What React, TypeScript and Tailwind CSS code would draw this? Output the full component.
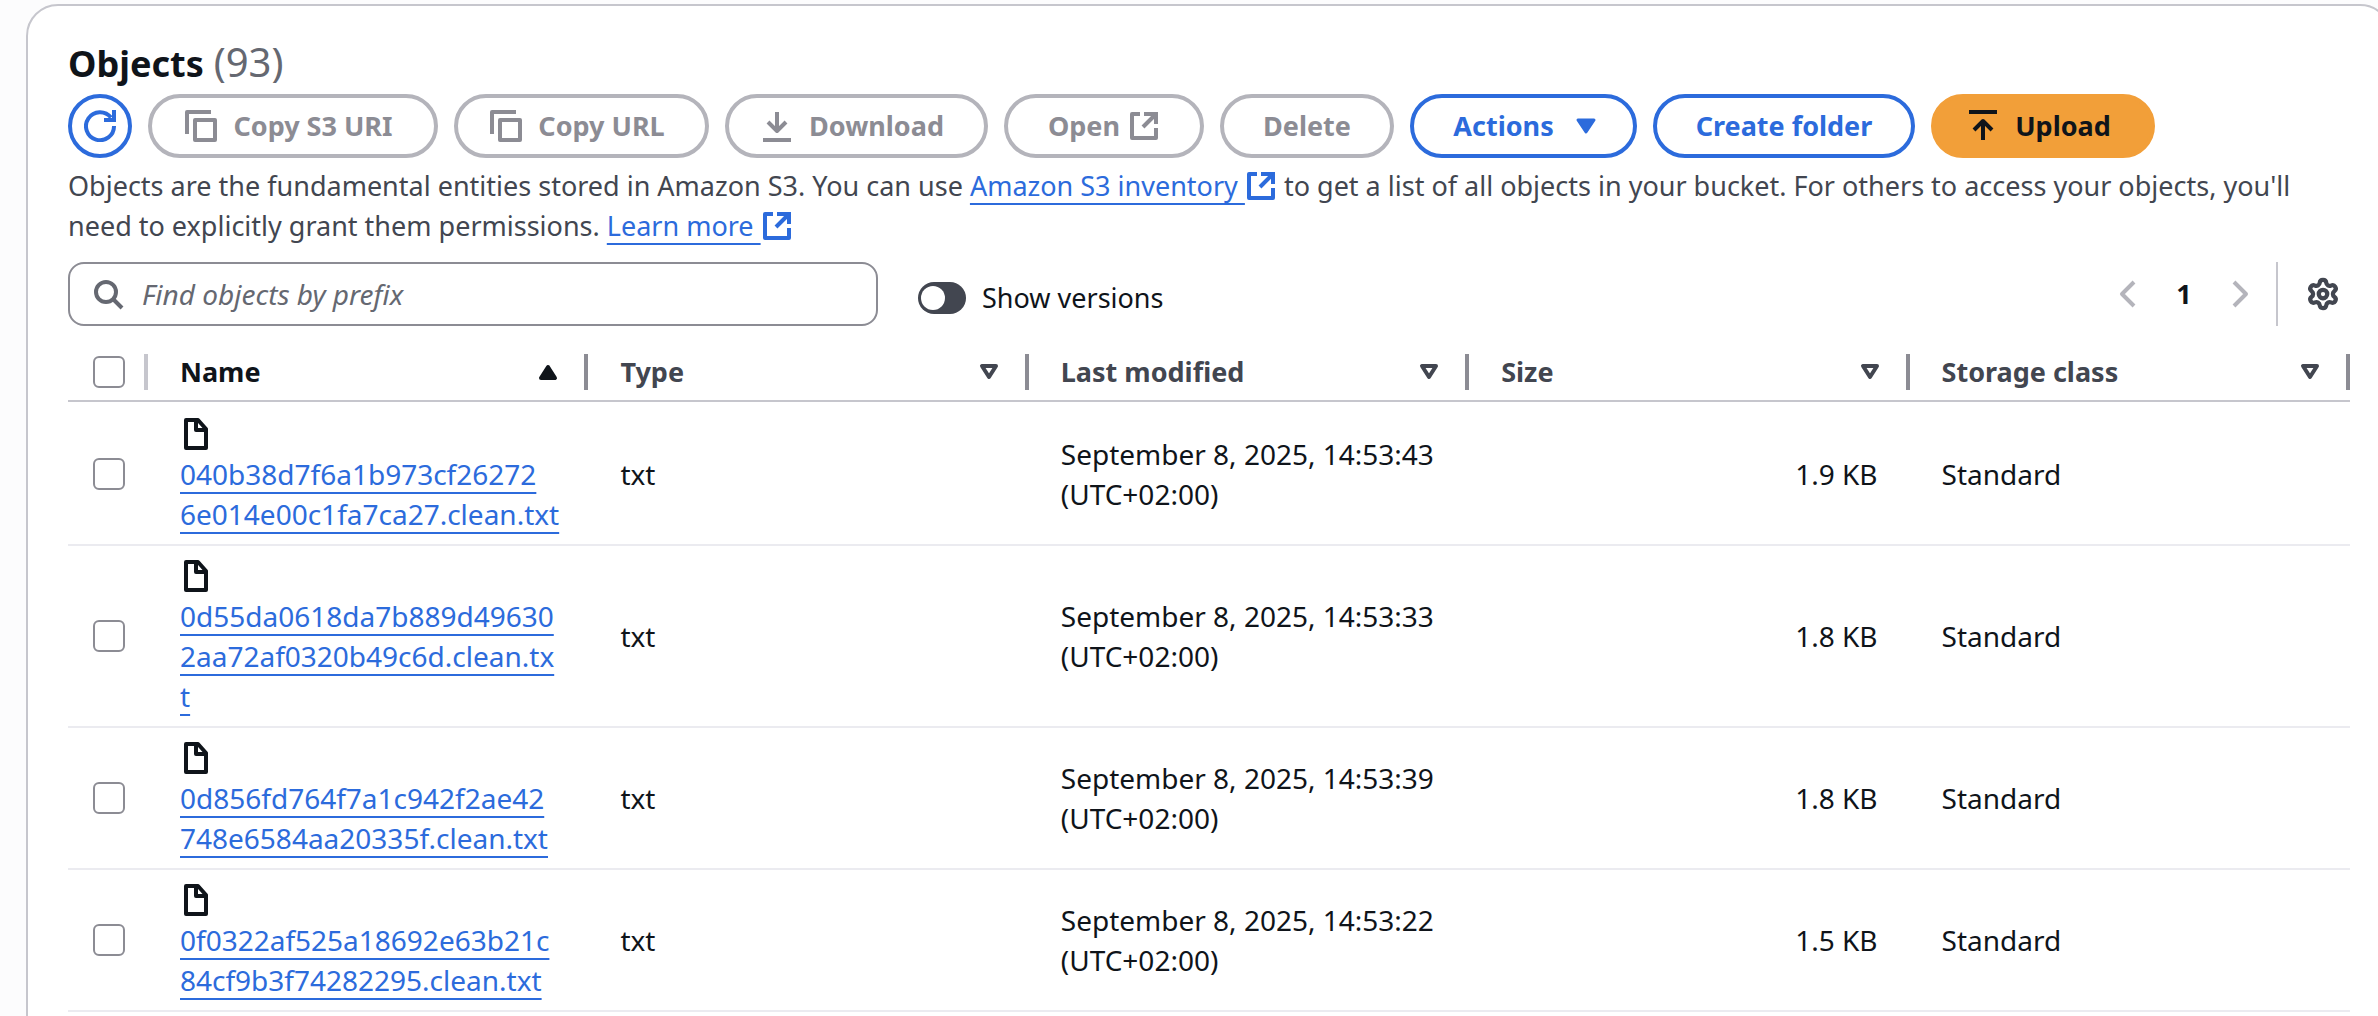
import React from "react";
import { Settings } from "lucide-react";

interface S3Object {
  // long keys are wrapped by hand so that they break at the column edge
  name: string[];
  type: string;
  modified: string;
  size: string;
  storageClass: string;
}

const objects: S3Object[] = [
  {
    name: ["040b38d7f6a1b973cf26272", "6e014e00c1fa7ca27.clean.txt"],
    type: "txt",
    modified: "September 8, 2025, 14:53:43",
    size: "1.9 KB",
    storageClass: "Standard",
  },
  {
    name: ["0d55da0618da7b889d49630", "2aa72af0320b49c6d.clean.tx", "t"],
    type: "txt",
    modified: "September 8, 2025, 14:53:33",
    size: "1.8 KB",
    storageClass: "Standard",
  },
  {
    name: ["0d856fd764f7a1c942f2ae42", "748e6584aa20335f.clean.txt"],
    type: "txt",
    modified: "September 8, 2025, 14:53:39",
    size: "1.8 KB",
    storageClass: "Standard",
  },
  {
    name: ["0f0322af525a18692e63b21c", "84cf9b3f74282295.clean.txt"],
    type: "txt",
    modified: "September 8, 2025, 14:53:22",
    size: "1.5 KB",
    storageClass: "Standard",
  },
];

const columns = ["Name", "Type", "Last modified", "Size", "Storage class"];

interface IconProps {
  children: React.ReactNode;
  className?: string;
}

function Icon({ children, className = "" }: IconProps) {
  return (
    <svg
      viewBox="0 0 32 32"
      fill="none"
      stroke="currentColor"
      strokeWidth={4}
      strokeLinejoin="round"
      aria-hidden="true"
      className={`h-8 w-8 shrink-0 ${className}`}
    >
      {children}
    </svg>
  );
}

function CopyIcon() {
  return (
    <Icon className="-ml-2">
      <path d="M2 24V2H26" />
      <rect x="10" y="10" width="20" height="20" />
    </Icon>
  );
}

function ExternalIcon({ className = "" }: { className?: string }) {
  return (
    <Icon className={className}>
      <path d="M12 4H4V28H28V18" />
      <path d="M16 4H28V14" strokeLinejoin="miter" />
      <path d="M27 5L15 17" />
    </Icon>
  );
}

function FileIcon() {
  return (
    <Icon>
      <path d="M6 2H18L26 11V30H6Z" />
      <path d="M16 2V12H26" />
    </Icon>
  );
}

function SortIcon({ active }: { active: boolean }) {
  return (
    <svg
      viewBox="0 0 20 16"
      strokeWidth={4}
      strokeLinejoin="round"
      aria-hidden="true"
      className="h-4 w-5"
    >
      {active ? (
        <path d="M10 3L17 14H3Z" fill="currentColor" stroke="currentColor" />
      ) : (
        <path d="M3 2H17L10 13Z" fill="none" stroke="currentColor" />
      )}
    </svg>
  );
}

interface ButtonProps {
  children: React.ReactNode;
  width: string;
  variant?: "normal" | "disabled" | "primary";
}

const variants = {
  normal: "border-[#2c6bdc] text-[#2c6bdc]",
  disabled: "border-[#b4b4bb] text-[#8c8c94]",
  primary: "border-[#f29f39] bg-[#f29f39] text-[#0f141a]",
};

function Button({ children, width, variant = "normal" }: ButtonProps) {
  return (
    <button
      type="button"
      disabled={variant === "disabled"}
      className={`flex h-16 items-center justify-center gap-4 whitespace-nowrap rounded-full border-4 font-bold ${width} ${variants[variant]}`}
    >
      {children}
    </button>
  );
}

function Checkbox({ label }: { label: string }) {
  return (
    <input
      type="checkbox"
      aria-label={label}
      className="block h-8 w-8 appearance-none rounded-md border-2 border-[#8c8c94] bg-white checked:bg-[#2c6bdc]"
    />
  );
}

const linkClass =
  "text-[#2c6bdc] underline decoration-2 underline-offset-[7px] [text-decoration-skip-ink:none]";

function Toolbar() {
  return (
    <div className="mt-2 flex gap-4">
      <button
        type="button"
        aria-label="Refresh"
        className="flex h-16 w-16 items-center justify-center rounded-full border-4 border-[#2c6bdc] text-[#2c6bdc]"
      >
        <Icon>
          <path d="M30 16A14 14 0 1 1 27 7.5" />
          <path d="M20 10H30V0" strokeLinejoin="miter" />
        </Icon>
      </button>
      <Button variant="disabled" width="w-[290px]">
        <CopyIcon />
        Copy S3 URI
      </Button>
      <Button variant="disabled" width="w-[255px]">
        <CopyIcon />
        Copy URL
      </Button>
      <Button variant="disabled" width="w-[263px]">
        <Icon className="-ml-2">
          <path d="M16 2V20" />
          <path d="M7 12L16 21L25 12" />
          <path d="M2 30H30" />
        </Icon>
        Download
      </Button>
      <Button variant="disabled" width="w-[200px]">
        <span className="flex items-center gap-2">
          Open
          <ExternalIcon />
        </span>
      </Button>
      <Button variant="disabled" width="w-[174px]">
        Delete
      </Button>
      <Button width="w-[227px]">
        Actions
        <Icon className="-mr-2">
          <path d="M8 10H24L16 22Z" fill="currentColor" strokeWidth={3} />
        </Icon>
      </Button>
      <Button width="w-[262px]">Create folder</Button>
      <Button variant="primary" width="w-[224px]">
        <Icon className="-ml-2">
          <path d="M2 2H30" />
          <path d="M16 30V12" />
          <path d="M7 20L16 11L25 20" />
        </Icon>
        Upload
      </Button>
    </div>
  );
}

function Filters() {
  return (
    <div className="mt-4 flex h-16 items-center">
      <label className="flex h-16 w-[810px] items-center gap-[18px] rounded-2xl border-2 border-[#8c8c94] px-[22px] text-[28px] text-[#656871]">
        <Icon>
          <circle cx="14" cy="14" r="10" />
          <path d="M21 21L30 30" />
        </Icon>
        <input
          type="search"
          aria-label="Find objects by prefix"
          placeholder="Find objects by prefix"
          className="min-w-0 flex-1 outline-none placeholder:italic placeholder:text-[#656871]"
        />
      </label>
      <label className="ml-10 flex items-center gap-4 pt-2 text-[#0f141a]">
        <input
          type="checkbox"
          role="switch"
          className="flex h-8 w-12 appearance-none items-center rounded-full bg-[#424650] px-[3px] before:h-6 before:w-6 before:rounded-full before:bg-white checked:justify-end"
        />
        Show versions
      </label>
      <div className="ml-auto flex items-center">
        <button type="button" aria-label="Previous page" className="text-[#b4b4bb]">
          <Icon>
            <path d="M22 4L10 16L22 28" />
          </Icon>
        </button>
        <button type="button" className="w-20 font-bold text-[#0f141a]">
          1
        </button>
        <button type="button" aria-label="Next page" className="text-[#b4b4bb]">
          <Icon>
            <path d="M10 4L22 16L10 28" />
          </Icon>
        </button>
        <span className="ml-5 h-16 w-0.5 bg-[#c6c6cd]" />
        <button type="button" aria-label="Preferences" className="ml-7 mr-2.5 text-[#424650]">
          <Settings className="h-[34px] w-[34px]" strokeWidth={3} />
        </button>
      </div>
    </div>
  );
}

function ObjectsTable() {
  return (
    <table className="mt-[18px] w-full table-fixed border-separate border-spacing-0 text-left text-[#0f141a]">
      <thead>
        <tr className="h-[58px]">
          <th className="w-20 border-b-2 border-[#c6c6cd] p-0">
            <div className="flex items-center justify-between pl-[25px]">
              <Checkbox label="Select all objects" />
              <span className="h-9 w-1 bg-[#c6c6cd]" />
            </div>
          </th>
          {columns.map((column, i) => (
            <th
              key={column}
              className={`border-b-2 border-[#c6c6cd] p-0 font-bold ${i === 0 ? "" : "text-[#424650]"}`}
            >
              <div className="flex items-center pl-8">
                <span className="flex-1">{column}</span>
                <button type="button" aria-label={`Sort by ${column}`} className="mr-[26px]">
                  <SortIcon active={i === 0} />
                </button>
                <span className="h-9 w-1 bg-[#8c8c94]" />
              </div>
            </th>
          ))}
        </tr>
      </thead>
      <tbody className="text-[28px] [&>tr:first-child>td]:pt-3 [&>tr>td]:border-b-2 [&>tr>td]:border-[#ebebf0] [&>tr>td]:py-2.5">
        {objects.map((object) => (
          <tr key={object.name[0]}>
            <td className="pl-[25px]">
              <Checkbox label={`Select ${object.name.join("")}`} />
            </td>
            <td className="whitespace-nowrap px-8">
              <div className="flex h-10 items-center">
                <FileIcon />
              </div>
              <a href="#object" className={linkClass}>
                {object.name.map((line) => (
                  <React.Fragment key={line}>
                    {line}
                    <br />
                  </React.Fragment>
                ))}
              </a>
            </td>
            <td className="px-8">{object.type}</td>
            <td className="px-8">
              {object.modified}
              <br />
              (UTC+02:00)
            </td>
            <td className="px-8 text-right">{object.size}</td>
            <td className="px-8">{object.storageClass}</td>
          </tr>
        ))}
      </tbody>
    </table>
  );
}

function App() {
  return (
    <div className="h-screen overflow-hidden bg-[#fcfcfd] pl-[26px] pt-1 font-['Noto_Sans','Open_Sans',sans-serif] text-[27px] leading-10">
      {/* the panel runs a little past the right edge of the window */}
      <main className="-mr-3.5 min-h-screen rounded-[32px] border-2 border-[#c6c6cd] bg-white px-10 pb-10 pt-8">
        <h1 className="flex h-12 items-baseline gap-2.5 text-[36px] font-bold leading-[48px] text-[#0f141a]">
          Objects <span className="text-[40px] font-normal text-[#656871]">(93)</span>
        </h1>
        <Toolbar />
        <p className="mt-2 text-[#424650]">
          Objects are the fundamental entities stored in Amazon S3. You can use{" "}
          <a href="#inventory" className="text-[#2c6bdc]">
            <span className={linkClass}>Amazon S3 inventory&nbsp;</span>
            <ExternalIcon className="inline-block align-[-6px]" />
          </a>{" "}
          to get a list of all objects in your bucket. For others to access your objects, you'll
          need to explicitly grant them permissions.{" "}
          <a href="#learn-more" className="text-[#2c6bdc]">
            <span className={linkClass}>Learn more&nbsp;</span>
            <ExternalIcon className="inline-block align-[-6px]" />
          </a>
        </p>
        <Filters />
        <ObjectsTable />
      </main>
    </div>
  );
}

export default App;
